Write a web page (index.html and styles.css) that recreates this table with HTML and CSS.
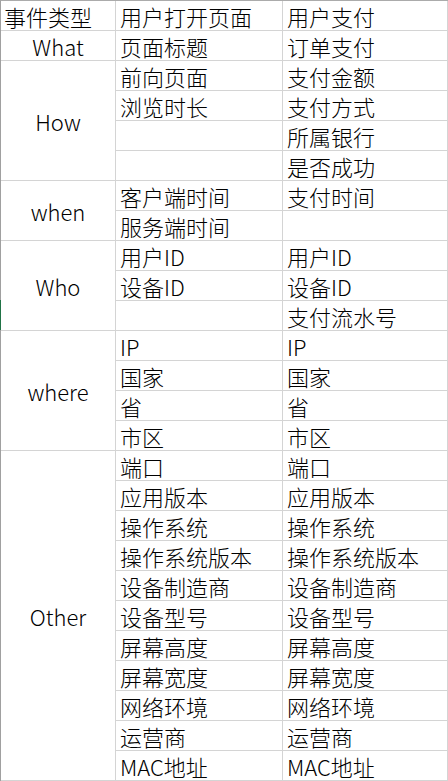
FILE: index.html
```html
<!DOCTYPE html>
<html lang="zh-CN">
<head>
<meta charset="utf-8">
<title>事件类型</title>
<link rel="stylesheet" href="styles.css">
</head>
<body>
<div class="sheet">
  <div class="grid">
    <div class="cell head">事件类型</div>
    <div class="cell">用户打开页面</div>
    <div class="cell">用户支付</div>

    <div class="cell cat">What</div>
    <div class="cell">页面标题</div>
    <div class="cell">订单支付</div>

    <div class="cell cat span4">How</div>
    <div class="cell">前向页面</div>
    <div class="cell">支付金额</div>
    <div class="cell">浏览时长</div>
    <div class="cell">支付方式</div>
    <div class="cell"></div>
    <div class="cell">所属银行</div>
    <div class="cell"></div>
    <div class="cell">是否成功</div>

    <div class="cell cat span2">when</div>
    <div class="cell">客户端时间</div>
    <div class="cell">支付时间</div>
    <div class="cell">服务端时间</div>
    <div class="cell"></div>

    <div class="cell cat span3">Who</div>
    <div class="cell">用户ID</div>
    <div class="cell">用户ID</div>
    <div class="cell">设备ID</div>
    <div class="cell">设备ID</div>
    <div class="cell"></div>
    <div class="cell">支付流水号</div>

    <div class="cell cat span4">where</div>
    <div class="cell">IP</div>
    <div class="cell">IP</div>
    <div class="cell">国家</div>
    <div class="cell">国家</div>
    <div class="cell">省</div>
    <div class="cell">省</div>
    <div class="cell">市区</div>
    <div class="cell">市区</div>

    <div class="cell cat span11">Other</div>
    <div class="cell">端口</div>
    <div class="cell">端口</div>
    <div class="cell">应用版本</div>
    <div class="cell">应用版本</div>
    <div class="cell">操作系统</div>
    <div class="cell">操作系统</div>
    <div class="cell">操作系统版本</div>
    <div class="cell">操作系统版本</div>
    <div class="cell">设备制造商</div>
    <div class="cell">设备制造商</div>
    <div class="cell">设备型号</div>
    <div class="cell">设备型号</div>
    <div class="cell">屏幕高度</div>
    <div class="cell">屏幕高度</div>
    <div class="cell">屏幕宽度</div>
    <div class="cell">屏幕宽度</div>
    <div class="cell">网络环境</div>
    <div class="cell">网络环境</div>
    <div class="cell">运营商</div>
    <div class="cell">运营商</div>
    <div class="cell">MAC地址</div>
    <div class="cell">MAC地址</div>
  </div>
  <div class="row-marker"></div>
</div>
</body>
</html>
```
FILE: styles.css
```css
html, body {
  margin: 0;
  padding: 0;
  background: #ffffff;
}

.sheet {
  position: relative;
  width: 448px;
}

.grid {
  display: grid;
  grid-template-columns: 115px 167px 165px;
  grid-auto-rows: 30px;
  border-top: 1px solid #ababab;
  border-left: 1px solid #a0a0a0;
  font-family: "Noto Sans CJK SC", "Noto Sans", sans-serif;
  font-size: 22px;
  font-weight: 300;
  color: #000000;
}

.cell {
  box-sizing: border-box;
  border-right: 1px solid #d4d4d4;
  border-bottom: 1px solid #d4d4d4;
  display: flex;
  align-items: center;
  padding: 1px 0 0 4px;
  line-height: 26px;
  white-space: nowrap;
}

.head {
  padding-left: 3px;
}

.cat {
  justify-content: center;
  padding-left: 0;
}

.span2 { grid-row: span 2; }
.span3 { grid-row: span 3; }
.span4 { grid-row: span 4; }
.span11 { grid-row: span 11; }

.row-marker {
  position: absolute;
  left: 0;
  top: 300px;
  width: 1px;
  height: 30px;
  background: #217346;
}
```
